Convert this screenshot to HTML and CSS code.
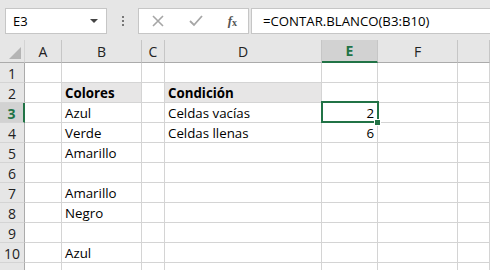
FILE: index.html
```html
<!DOCTYPE html>
<html lang="es">
<head>
    <meta charset="UTF-8">
    <title>CONTAR.BLANCO</title>
    <link rel="stylesheet" href="styles.css">
</head>
<body>
    <div class="toolbar">
        <div class="name-box">
            <span>E3</span>
            <svg class="caret" width="8" height="4" viewBox="0 0 8 4"><path d="M0 0h8L4 4z" fill="#444"/></svg>
        </div>
        <div class="grip"><i></i><i></i><i></i></div>
        <div class="fx-box">
            <svg width="14" height="14" viewBox="0 0 14 14"><path d="M2 2l10 10M12 2L2 12" stroke="#a6a6a6" stroke-width="1.6"/></svg>
            <svg width="14" height="14" viewBox="0 0 14 14"><path d="M1 7l4 4 8-9" stroke="#a6a6a6" stroke-width="1.8" fill="none"/></svg>
            <span class="fx"><i>f</i><sub>x</sub></span>
        </div>
        <div class="formula">=CONTAR.BLANCO(B3:B10)</div>
    </div>

    <div class="sheet">
        <div class="corner"><span class="tri"></span></div>
        <div class="col-head">A</div>
        <div class="col-head">B</div>
        <div class="col-head">C</div>
        <div class="col-head">D</div>
        <div class="col-head active">E</div>
        <div class="col-head">F</div>
        <div class="col-head"></div>

        <div class="row-head">1</div>
        <div class="cell"></div><div class="cell"></div><div class="cell"></div><div class="cell"></div><div class="cell"></div><div class="cell"></div><div class="cell"></div>

        <div class="row-head">2</div>
        <div class="cell"></div><div class="cell fill bold">Colores</div><div class="cell"></div><div class="cell fill bold">Condición</div><div class="cell"></div><div class="cell"></div><div class="cell"></div>

        <div class="row-head active">3</div>
        <div class="cell"></div><div class="cell">Azul</div><div class="cell"></div><div class="cell">Celdas vacías</div><div class="cell num selected">2<span class="handle"></span></div><div class="cell"></div><div class="cell"></div>

        <div class="row-head">4</div>
        <div class="cell"></div><div class="cell">Verde</div><div class="cell"></div><div class="cell">Celdas llenas</div><div class="cell num">6</div><div class="cell"></div><div class="cell"></div>

        <div class="row-head">5</div>
        <div class="cell"></div><div class="cell">Amarillo</div><div class="cell"></div><div class="cell"></div><div class="cell"></div><div class="cell"></div><div class="cell"></div>

        <div class="row-head">6</div>
        <div class="cell"></div><div class="cell"></div><div class="cell"></div><div class="cell"></div><div class="cell"></div><div class="cell"></div><div class="cell"></div>

        <div class="row-head">7</div>
        <div class="cell"></div><div class="cell">Amarillo</div><div class="cell"></div><div class="cell"></div><div class="cell"></div><div class="cell"></div><div class="cell"></div>

        <div class="row-head">8</div>
        <div class="cell"></div><div class="cell">Negro</div><div class="cell"></div><div class="cell"></div><div class="cell"></div><div class="cell"></div><div class="cell"></div>

        <div class="row-head">9</div>
        <div class="cell"></div><div class="cell"></div><div class="cell"></div><div class="cell"></div><div class="cell"></div><div class="cell"></div><div class="cell"></div>

        <div class="row-head">10</div>
        <div class="cell"></div><div class="cell">Azul</div><div class="cell"></div><div class="cell"></div><div class="cell"></div><div class="cell"></div><div class="cell"></div>

        <div class="row-head"></div>
        <div class="cell"></div><div class="cell"></div><div class="cell"></div><div class="cell"></div><div class="cell"></div><div class="cell"></div><div class="cell"></div>
    </div>
</body>
</html>
```

FILE: styles.css
```css
:root {
    --chrome: #e6e6e6;
    --box-border: #c6c6c6;
    --grid: #d4d4d4;
    --head-line: #ababab;
    --green: #217346;
    --text: #000;
}

* {
    box-sizing: border-box;
}

body {
    margin: 0;
    width: 490px;
    height: 270px;
    overflow: hidden;
    background: #fff;
    font-family: 'Open Sans', 'Liberation Sans', sans-serif;
    color: var(--text);
}

/* Formula bar */
.toolbar {
    display: flex;
    align-items: center;
    height: 40px;
    padding: 8px 0 6px 5px;
    background: var(--chrome);
}

.name-box {
    display: flex;
    align-items: center;
    justify-content: space-between;
    width: 102px;
    height: 26px;
    padding: 0 8px 0 7px;
    background: #fff;
    border: 1px solid var(--box-border);
    font-size: 13px;
}

.grip {
    display: flex;
    flex-direction: column;
    gap: 2px;
    width: 31px;
    align-items: center;
}

.grip i {
    width: 2px;
    height: 2px;
    background: #777;
}

.fx-box {
    display: flex;
    align-items: center;
    justify-content: space-between;
    width: 111px;
    height: 26px;
    padding: 0 11px 0 12px;
    background: #fff;
    border: 1px solid var(--box-border);
}

.fx {
    font-family: 'Liberation Serif', serif;
    font-size: 13px;
    color: #555;
    font-weight: bold;
}

.fx sub {
    font-size: 10px;
    vertical-align: -1px;
}

.formula {
    flex: 1;
    height: 26px;
    margin-left: 2px;
    padding: 3px 0 0 11px;
    background: #fff;
    border: 1px solid var(--box-border);
    border-right: 0;
    font-size: 13.2px;
}

/* Sheet grid */
.sheet {
    display: grid;
    grid-template-columns: 25px 37px 80px 23px 157px 56px 80px 1fr;
    grid-template-rows: 23px repeat(11, 20px);
    font-size: 13.3px;
}

.corner {
    position: relative;
    background: var(--chrome);
    border-right: 1px solid var(--grid);
    border-bottom: 1px solid var(--head-line);
}

.tri {
    position: absolute;
    right: 3px;
    bottom: 3px;
    border-left: 12px solid transparent;
    border-bottom: 12px solid #b4b4b4;
}

.col-head {
    display: flex;
    align-items: center;
    justify-content: center;
    background: var(--chrome);
    border-right: 1px solid #c6c6c6;
    border-bottom: 1px solid var(--head-line);
    font-size: 14px;
    color: #222;
}

.col-head.active {
    background: #d2d2d2;
    border-bottom: 2px solid var(--green);
    color: var(--green);
    font-weight: bold;
}

.row-head {
    display: flex;
    align-items: center;
    justify-content: center;
    padding-top: 1px;
    background: var(--chrome);
    border-right: 1px solid var(--head-line);
    border-bottom: 1px solid var(--grid);
    font-size: 14px;
    color: #222;
}

.row-head.active {
    background: #d2d2d2;
    border-right: 2px solid var(--green);
    color: var(--green);
    font-weight: bold;
}

.cell {
    position: relative;
    padding: 1px 3px 0;
    line-height: 19px;
    white-space: nowrap;
    border-right: 1px solid var(--grid);
    border-bottom: 1px solid var(--grid);
}

.cell.fill {
    background: #e7e6e6;
}

.cell.bold {
    font-weight: bold;
}

.cell.num {
    text-align: right;
    padding-right: 3px;
}

.cell.selected::after {
    content: "";
    position: absolute;
    top: -2px;
    left: -1px;
    right: -2px;
    bottom: -1px;
    border: 2px solid var(--green);
}

.handle {
    position: absolute;
    right: -4px;
    bottom: -4px;
    width: 7px;
    height: 7px;
    background: var(--green);
    border: 1px solid #fff;
    z-index: 1;
}
```
